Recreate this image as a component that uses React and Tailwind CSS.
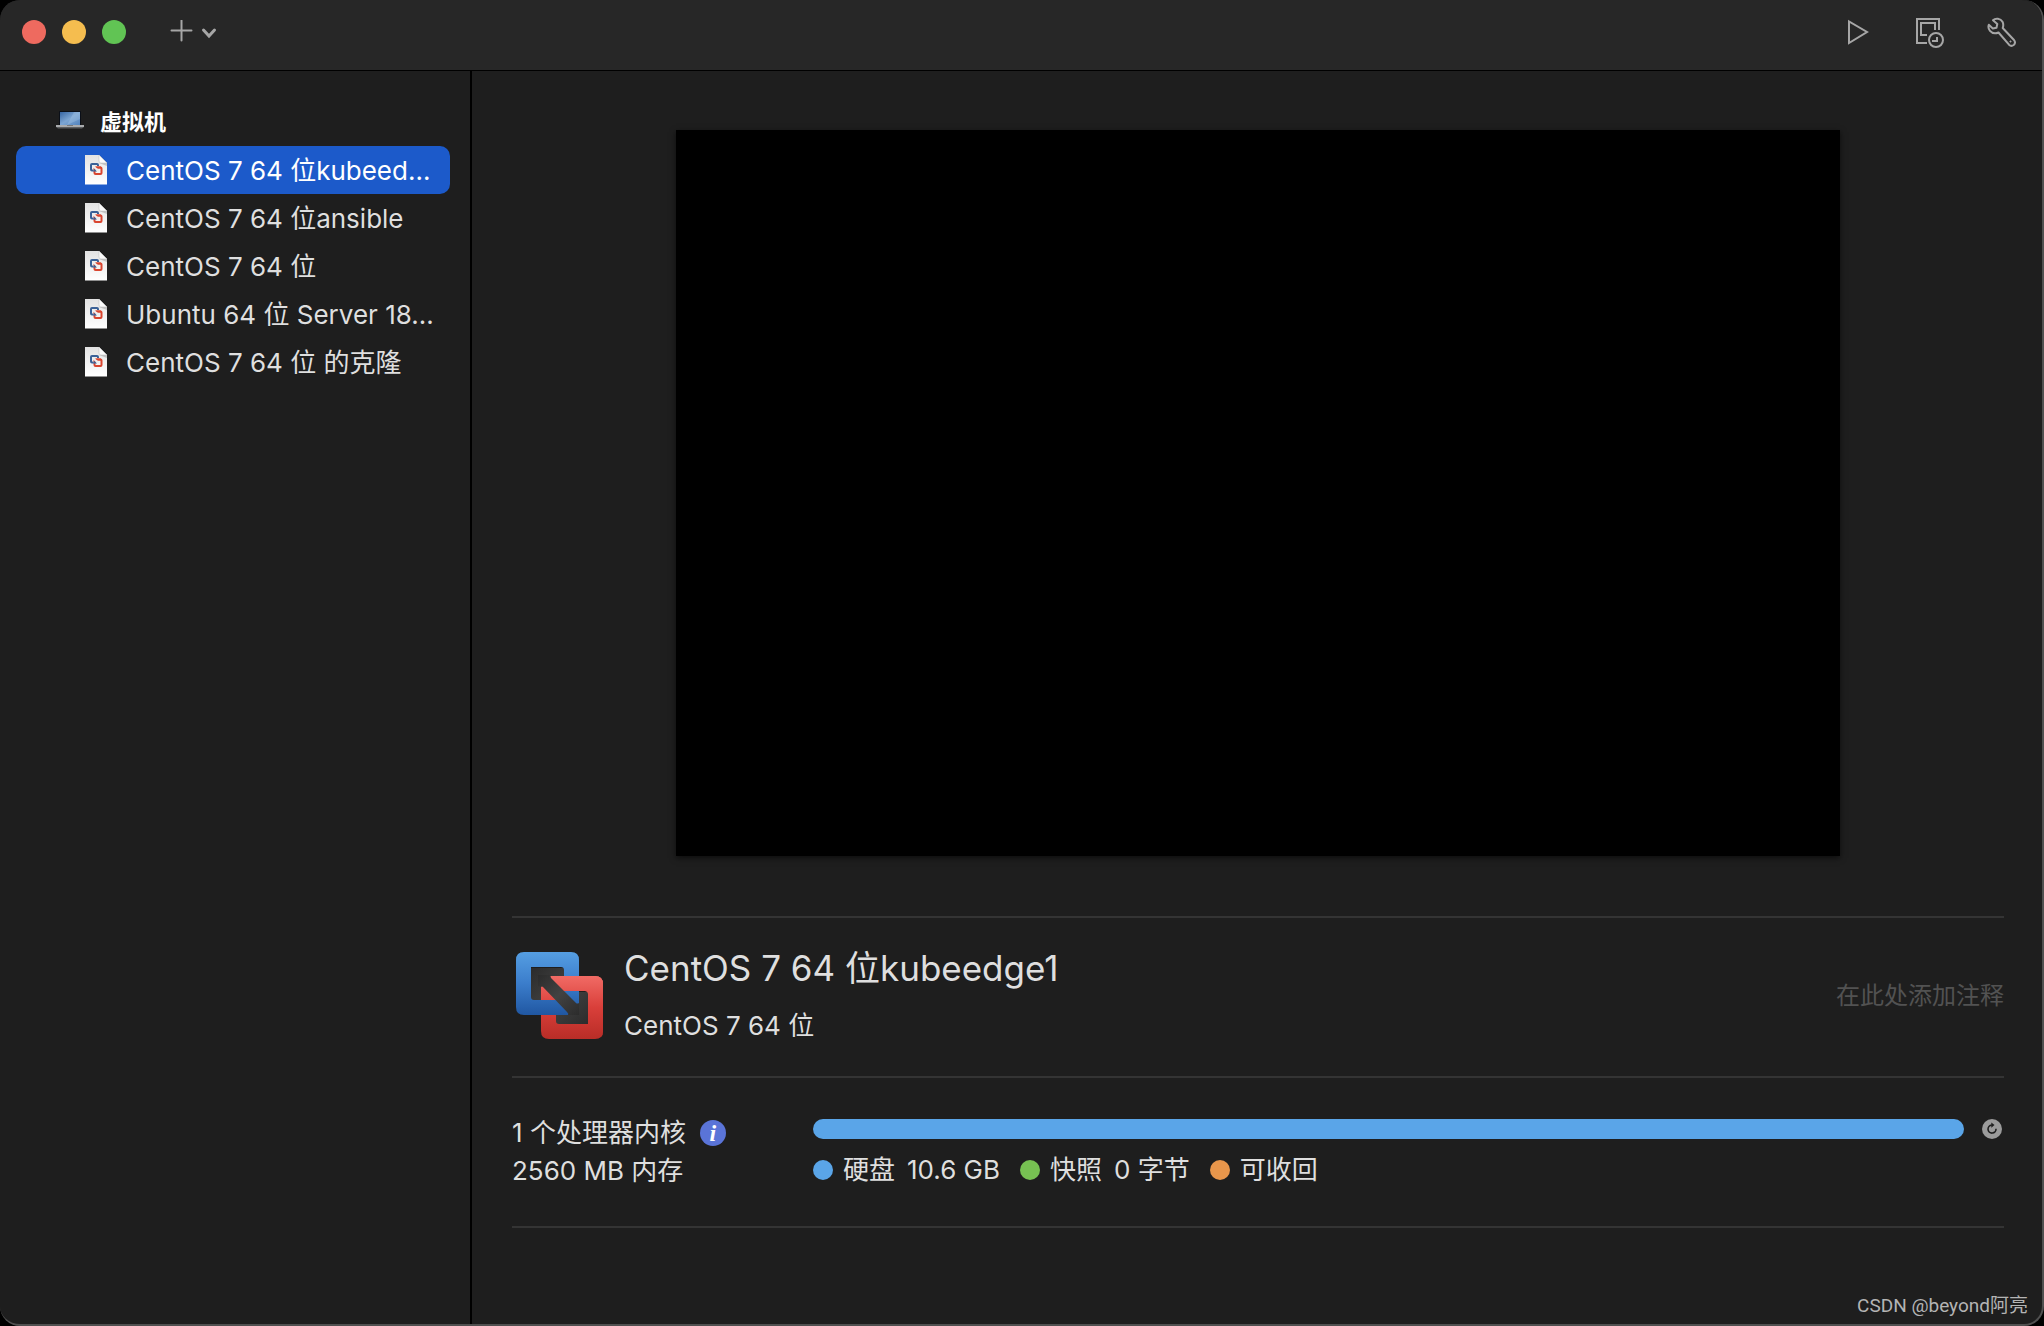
import { useState } from "react";

const machines = [
  { name: "CentOS 7 64 位kubeedge1", label: "CentOS 7 64 位kubeed..." },
  { name: "CentOS 7 64 位ansible" },
  { name: "CentOS 7 64 位" },
  { name: "Ubuntu 64 位 Server 18.04.5", label: "Ubuntu 64 位 Server 18..." },
  { name: "CentOS 7 64 位 的克隆" },
];

const legend = [
  { name: "硬盘", value: "10.6 GB", color: "bg-[#5aa5e8]" },
  { name: "快照", value: "0 字节", color: "bg-[#77c152]" },
  { name: "可收回", color: "bg-[#e8964b]" },
];

function LaptopIcon() {
  return (
    <svg width="28" height="22" viewBox="0 0 28 22" aria-hidden="true">
      <defs>
        <linearGradient id="lcd" x1="0" y1="0" x2="1" y2="1">
          <stop offset="0" stopColor="#3565a3" />
          <stop offset="0.5" stopColor="#7da6d3" />
          <stop offset="1" stopColor="#5283bd" />
        </linearGradient>
      </defs>
      <rect x="3" y="0" width="22" height="15" rx="1" fill="#0a0f18" />
      <rect x="4" y="1" width="20" height="13" fill="url(#lcd)" />
      <path d="M11 14 L18 1 H24 V8 Z" fill="#a8c8e8" opacity="0.35" />
      <rect x="0" y="14" width="28" height="2" fill="#a9abad" />
      <path d="M0 16h28l-2 1.5H2z" fill="#5d5f61" />
      <rect x="11" y="14" width="6" height="1" fill="#77797b" />
    </svg>
  );
}

function DocumentIcon() {
  return (
    <svg width="24" height="30" viewBox="0 0 24 30" className="shrink-0" aria-hidden="true">
      <defs>
        <linearGradient id="paper" x1="0" y1="0" x2="0" y2="1">
          <stop offset="0" stopColor="#e2e2e2" />
          <stop offset="1" stopColor="#ffffff" />
        </linearGradient>
      </defs>
      <path d="M1 0h14l8 8v21.5H1z" fill="url(#paper)" />
      <path d="M15 8h8v3z" fill="#c4c4c4" />
      <path d="M15 0l8 8h-6q-2 0-2-2z" fill="#fbfbfb" stroke="#b8b8b8" strokeWidth="0.5" />
      <rect x="10.500" y="12.500" width="7" height="6.500" rx="1" fill="none" stroke="#d9452f" strokeWidth="2" />
      <path
        d="M9.500 15.500H8q-1 0-1-1V10q0-1 1-1h5q1 0 1 1v1"
        fill="none"
        stroke="#3a6197"
        strokeWidth="2"
      />
      <path d="M9.500 11.500l5 4.500" stroke="#eeeeee" strokeWidth="2" />
      <path d="M9 16.500h4l-2.500-2.500z" fill="#3a6197" />
      <path d="M12 11.500h5v2h-3z" fill="#d9452f" />
    </svg>
  );
}

function MachineLogo() {
  return (
    <svg width="88" height="88" viewBox="0 0 88 88" className="shrink-0" aria-hidden="true">
      <defs>
        <linearGradient id="blue" x1="0" y1="0" x2="0" y2="1">
          <stop offset="0" stopColor="#559ee2" />
          <stop offset="0.5" stopColor="#3b7dcb" />
          <stop offset="1" stopColor="#2057a2" />
        </linearGradient>
        <linearGradient id="red" x1="0" y1="0" x2="0" y2="1">
          <stop offset="0" stopColor="#f16b65" />
          <stop offset="0.5" stopColor="#d93f3a" />
          <stop offset="1" stopColor="#b92d27" />
        </linearGradient>
        <linearGradient id="bar" x1="0" y1="0" x2="1" y2="1">
          <stop offset="0" stopColor="#2b2b2b" />
          <stop offset="0.5" stopColor="#424242" />
          <stop offset="1" stopColor="#2c2c2c" />
        </linearGradient>
        <clipPath id="upper">
          <path d="M20 20H88V88z" />
        </clipPath>
      </defs>
      <path d="M15 16h33v32H15zM40 40h32v32H40z" fill="url(#bar)" />
      <path
        id="red-ring"
        fillRule="evenodd"
        fill="url(#red)"
        d="M33 24H79q8 0 8 8V79q0 8-8 8H33q-8 0-8-8V32q0-8 8-8zM40 39V69q0 3 3 3H72V42q0-3-3-3z"
      />
      <path
        fillRule="evenodd"
        fill="url(#blue)"
        d="M8 0H55q8 0 8 8V55q0 8-8 8H8q-8 0-8-8V8q0-8 8-8zM15 15V45q0 3 3 3H48V18q0-3-3-3z"
      />
      <use href="#red-ring" clipPath="url(#upper)" />
      <path
        d="M22 23h13q-1 1 0 3L60 51q1 1 3 0V63H52q1-1-1-3L27 35q-1-1-2 0l-3-1z"
        fill="url(#bar)"
      />
    </svg>
  );
}

function Toolbar() {
  return (
    <header className="flex h-[71px] items-center justify-between rounded-t-[20px] border-b border-black bg-[#272727] pr-6 pb-1.5 pl-[22px] text-[#a6a6a6]">
      <div className="flex items-center">
        <div className="flex gap-4">
          <button aria-label="关闭" className="size-6 rounded-full bg-[#ee6a5f]" />
          <button aria-label="最小化" className="size-6 rounded-full bg-[#f5bd4f]" />
          <button aria-label="缩放" className="size-6 rounded-full bg-[#61c454]" />
        </div>
        <button aria-label="添加" className="ml-11">
          <svg width="48" height="24" viewBox="0 0 48 24" fill="none" stroke="currentColor" strokeLinecap="round">
            <path d="M1.500 10.500h20M11.500 .5v20" strokeWidth="2" />
            <path d="M33.500 10l5.500 6 5.500-6" strokeWidth="3" />
          </svg>
        </button>
      </div>
      <div className="flex items-center gap-10">
        <button aria-label="启动">
          <svg width="32" height="32" viewBox="0 0 32 32" fill="none" stroke="currentColor" strokeWidth="2">
            <path d="M7 5.500v21.500L25 16z" />
          </svg>
        </button>
        <button aria-label="快照">
          <svg width="32" height="32" viewBox="0 0 32 32" fill="none" stroke="currentColor" strokeWidth="2">
            <path d="M13 27H3V3h22v11" />
            <path d="M13 19H7V7h14v7" />
            <circle cx="22" cy="24" r="7" />
            <path d="M23 21v4h-5" />
          </svg>
        </button>
        <button aria-label="设置">
          <svg width="32" height="32" viewBox="0 0 32 32" fill="none" stroke="currentColor" strokeWidth="2" strokeLinejoin="round">
            <path d="M7 4.200C9.500 1.800 14.500 2.200 16.500 5.800c1 2 1 4 .2 6.200L28 24c1.500 2 .8 4-.3 5-1.300 1-3.300 1-4.700-.3L12.500 16.500c-3 1.300-6.500.6-8.500-1.700-1.700-2-1.800-4.300-1.200-6l4 3.700 3.700-.8.800-3.700z" />
            <circle cx="24.500" cy="25.500" r="0.600" fill="currentColor" strokeWidth="1" />
          </svg>
        </button>
      </div>
    </header>
  );
}

function Sidebar({ selected, onSelect }) {
  return (
    <nav aria-label="虚拟机" className="w-[472px] shrink-0 border-r-2 border-black px-4 pt-[27px]">
      <h2 className="flex h-12 items-center gap-4 pl-10 text-[22px] font-bold text-white">
        <LaptopIcon />
        虚拟机
      </h2>
      <ul className="mr-1">
        {machines.map(({ name, label }) => (
          <li key={name}>
            <button
              title={name}
              onClick={() => onSelect(name)}
              className={`flex h-12 w-full items-center gap-[18px] rounded-[10px] pl-[68px] text-left text-[26px] whitespace-nowrap ${
                name === selected ? "bg-[#1c5aca] text-white" : ""
              }`}
            >
              <DocumentIcon />
              {label ?? name}
            </button>
          </li>
        ))}
      </ul>
    </nav>
  );
}

function Summary({ name }) {
  return (
    <section className="flex h-40 items-center border-t-2 border-[#343434] pb-0.5 pl-1">
      <MachineLogo />
      <div className="ml-5">
        <h1 className="text-[35px] leading-10">{name}</h1>
        <p className="mt-5 text-[26px] leading-9">CentOS 7 64 位</p>
      </div>
      <input
        aria-label="注释"
        placeholder="在此处添加注释"
        className="ml-auto w-72 bg-transparent text-right text-2xl outline-none placeholder:text-[#525252]"
      />
    </section>
  );
}

function Resources() {
  return (
    <section className="flex h-[152px] gap-10 border-y-2 border-[#343434] pt-9 text-[26px] leading-[38px]">
      <div className="w-[261px] shrink-0">
        <p className="flex items-center gap-3.5">
          1 个处理器内核
          <button
            aria-label="信息"
            className="flex size-[26px] items-center justify-center rounded-full bg-[#5a74d8] font-['Liberation_Serif',serif] text-2xl leading-6 font-bold text-white italic"
          >
            i
          </button>
        </p>
        <p>2560 MB 内存</p>
      </div>
      <div className="min-w-0 flex-1 pt-[5px]">
        <div className="flex items-center gap-[18px] pr-0.5">
          <div className="h-5 flex-1 rounded-full bg-[#5aa5e8]" />
          <button aria-label="刷新">
            <svg width="20" height="20" viewBox="0 0 20 20" fill="none" stroke="#1e1e1e" strokeWidth="1.600">
              <circle cx="10" cy="10" r="10" fill="#9b9b9b" stroke="none" />
              <path d="M14 9.800a4 4 0 1 1-4.300-3.700" />
              <path d="M9.300 3.500l3.200 2.600-3.200 2.600z" fill="#1e1e1e" stroke="none" />
            </svg>
          </button>
        </div>
        <ul className="mt-3 flex gap-5">
          {legend.map(({ name, value, color }) => (
            <li key={name} className="flex items-center">
              <span className={`mr-2.5 size-5 rounded-full ${color}`} />
              {name}
              {value && <span className="ml-3">{value}</span>}
            </li>
          ))}
        </ul>
      </div>
    </section>
  );
}

export default function App() {
  const [selected, setSelected] = useState(machines[0].name);

  return (
    <div className="min-h-screen bg-black font-['Inter','Noto_Sans_CJK_SC',sans-serif] text-[#dfdfdf]">
      <div className="flex min-h-screen flex-col rounded-[20px] border-r-2 border-b-2 border-[#505050] bg-[#1e1e1e]">
        <Toolbar />
        <div className="flex flex-1">
          <Sidebar selected={selected} onSelect={setSelected} />
          <main className="flex min-w-0 flex-1 flex-col pt-[59px] pr-[38px] pl-10">
            <div className="mx-auto mb-[60px] aspect-[194/121] w-[78%] bg-black shadow-[0_2px_6px_rgba(0,0,0,0.6)]" />
            <Summary name={selected} />
            <Resources />
            <footer className="mt-auto -mr-6 pb-1 text-right font-['Roboto','Noto_Sans_CJK_SC',sans-serif] text-[19px] text-[#b4b4b4]">
              CSDN @beyond阿亮
            </footer>
          </main>
        </div>
      </div>
    </div>
  );
}
